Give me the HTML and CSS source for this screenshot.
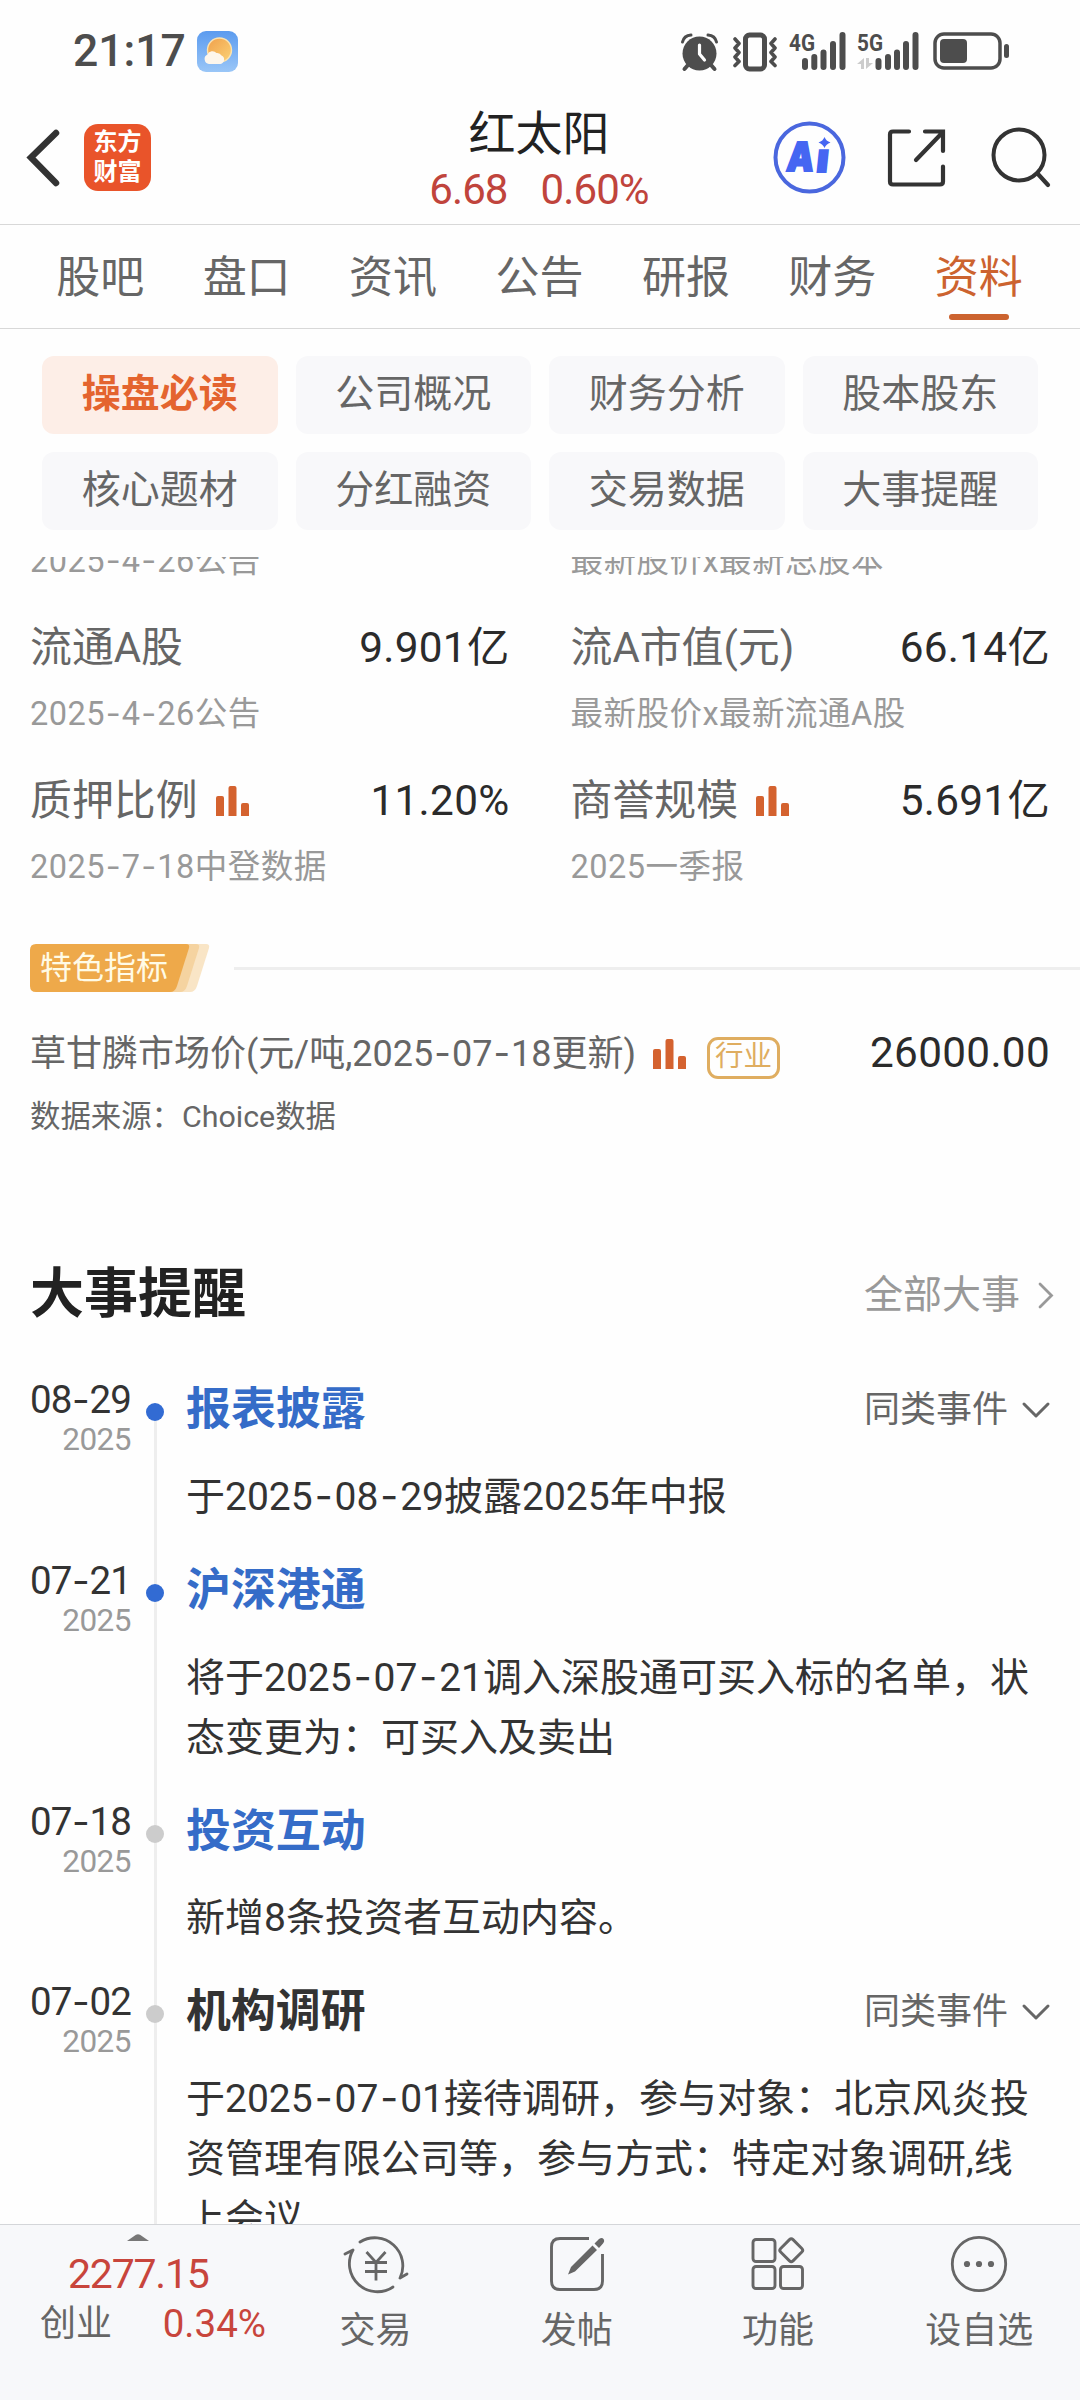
FILE: index.html
```html
<!DOCTYPE html>
<html lang="zh-CN">
<head>
    <meta charset="UTF-8" />
    <meta name="viewport" content="width=device-width, initial-scale=1.0" />
    <title>红太阳 - 资料</title>
    <link rel="stylesheet" href="styles.css">
</head>
<body>
    <div class="statusbar">
        <span class="clock">21:17</span>
        <svg class="weather" width="41" height="41" viewBox="0 0 41 41">
            <defs>
                <linearGradient id="sky" x1="0" y1="0" x2="0" y2="1">
                    <stop offset="0" stop-color="#5b9bef" /><stop offset="1" stop-color="#9ac6f7" />
                </linearGradient>
                <linearGradient id="sun" x1="0" y1="0" x2="1" y2="1">
                    <stop offset="0" stop-color="#f0a04b" /><stop offset="1" stop-color="#fbd277" />
                </linearGradient>
            </defs>
            <rect width="41" height="41" rx="9" fill="url(#sky)" />
            <circle cx="22.500" cy="19" r="12" fill="url(#sun)" stroke="#fbe3b0" stroke-width="1.400" />
            <path d="M12 33a5 5 0 0 1-1.500-9.500a5.500 5.500 0 0 1 9-1.500a5 5 0 0 1 5 2.500a4.500 4.500 0 0 1-1 8.500z" fill="#fdf6ec" />
        </svg>
        <div class="status-icons">
            <svg width="37" height="40" viewBox="0 0 37 40">
                <circle cx="18.500" cy="22.500" r="17" fill="#4d4d4d" />
                <path d="M1.500 11Q3 4.500 10 4M35.500 11Q34 4.500 27 4" stroke="#4d4d4d" stroke-width="3" fill="none" stroke-linecap="round" />
                <path d="M7 34l-3.500 4M30 34l3.500 4" stroke="#4d4d4d" stroke-width="4" stroke-linecap="round" />
                <path d="M18.500 14v9l5 6" stroke="#fff" stroke-width="3.200" fill="none" stroke-linecap="round" stroke-linejoin="round" />
            </svg>
            <svg class="vibrate" width="46" height="40" viewBox="0 0 46 40">
                <rect x="13.500" y="4" width="19" height="34" rx="4" fill="none" stroke="#4d4d4d" stroke-width="5" />
                <path d="M3 8l4 4.500l-4 4.500l4 4.500l-4 4.500l4 4.500l-4 4M43 8l-4 4.500l4 4.500l-4 4.500l4 4.500l-4 4.500l4 4" stroke="#4d4d4d" stroke-width="3.600" fill="none" stroke-linecap="round" stroke-linejoin="round" />
            </svg>
            <svg class="signal" width="57" height="40" viewBox="0 0 57 40">
                <text x="0" y="19.500" textLength="26" lengthAdjust="spacingAndGlyphs">4G</text>
                <path d="M16 30v6M25.300 26v10M34.500 21.500v14.500M44 13v23M53.500 4v32" />
            </svg>
            <svg class="signal second" width="62" height="40" viewBox="0 0 62 40">
                <text x="0" y="19.500" textLength="26" lengthAdjust="spacingAndGlyphs">5G</text>
                <path d="M21.500 30v6M31 26v10M40 21.500v14.500M49 13v23M58.500 4v32" />
                <path class="arrows" d="M7 27v11h-3v-5h-4zM9 27v11l7-6h-4v-5z" />
            </svg>
            <svg class="battery" width="76" height="40" viewBox="0 0 76 40">
                <rect x="2" y="3" width="65" height="34" rx="9" fill="none" stroke="#4d4d4d" stroke-width="3.500" />
                <rect x="7" y="8" width="27" height="24" rx="4" fill="#4d4d4d" />
                <rect x="71" y="13" width="5" height="14" rx="2.500" fill="#4d4d4d" />
            </svg>
        </div>
    </div>

    <div class="header">
        <div class="header-left">
            <svg width="34" height="58" viewBox="0 0 34 58">
                <path d="M29 4L4 28.500L29 54" fill="none" stroke="#333" stroke-width="6.500" stroke-linecap="round" />
            </svg>
            <div class="logo">东方<br />财富</div>
        </div>
        <div class="stock">
            <div class="stock-name">红太阳</div>
            <div class="stock-price"><span>6.68</span><span>0.60%</span></div>
        </div>
        <div class="header-right">
            <svg width="73" height="73" viewBox="0 0 73 73">
                <circle cx="36.500" cy="36.500" r="34" fill="none" stroke="#4a67de" stroke-width="4" />
                <g class="ai-text" transform="skewX(-6)">
                    <text x="18" y="50" textLength="27" lengthAdjust="spacingAndGlyphs">A</text>
                    <text x="48" y="51.500" textLength="12" lengthAdjust="spacingAndGlyphs">ı</text>
                </g>
                <path d="M51.500 16q1.500 4 6 5.500q-4.500 1.500-6 5.500q-1.500-4-6-5.500q4.500-1.500 6-5.500z" fill="#4566f2" />
            </svg>
            <svg class="share" width="58" height="58" viewBox="0 0 58 58">
                <path d="M21 2.500H5Q2 2.500 2 5.500V52.500Q2 55.500 5 55.500H52Q55 55.500 55 52.500V37.500M37 2.500H55V22M54 4L28 31" fill="none" stroke="#333" stroke-width="4.200" stroke-linecap="round" />
            </svg>
            <svg class="search" width="60" height="62" viewBox="0 0 60 62">
                <circle cx="28" cy="28" r="25.500" fill="none" stroke="#333" stroke-width="4" />
                <path d="M46.500 46.500L57 58" stroke="#333" stroke-width="4.200" stroke-linecap="round" />
            </svg>
        </div>
    </div>

    <div class="tabs">
        <div class="tab">股吧</div>
        <div class="tab">盘口</div>
        <div class="tab">资讯</div>
        <div class="tab">公告</div>
        <div class="tab">研报</div>
        <div class="tab">财务</div>
        <div class="tab active">资料</div>
    </div>

    <div class="subnav">
        <div class="chip active">操盘必读</div>
        <div class="chip">公司概况</div>
        <div class="chip">财务分析</div>
        <div class="chip">股本股东</div>
        <div class="chip">核心题材</div>
        <div class="chip">分红融资</div>
        <div class="chip">交易数据</div>
        <div class="chip">大事提醒</div>
    </div>

    <div class="content">
        <div class="metrics">
            <div class="metric-note">2025<i>-</i>4<i>-</i>26公告</div>
            <div class="metric-note">最新股价x最新总股本</div>

            <div class="metric">
                <div class="metric-row"><span>流通A股</span><b>9.901亿</b></div>
                <div class="metric-note">2025<i>-</i>4<i>-</i>26公告</div>
            </div>
            <div class="metric">
                <div class="metric-row"><span>流A市值(元)</span><b>66.14亿</b></div>
                <div class="metric-note">最新股价x最新流通A股</div>
            </div>
            <div class="metric">
                <div class="metric-row">
                    <span>质押比例</span>
                    <svg class="bars" width="33" height="30" viewBox="0 0 33 30"><path d="M0 30V12q0-2 2-2h4q2 0 2 2V30zM12.500 30V2q0-2 2-2h4q2 0 2 2V30zM25 30V19q0-2 2-2h4q2 0 2 2V30z" /></svg>
                    <b>11.20%</b>
                </div>
                <div class="metric-note">2025<i>-</i>7<i>-</i>18中登数据</div>
            </div>
            <div class="metric">
                <div class="metric-row">
                    <span>商誉规模</span>
                    <svg class="bars" width="33" height="30" viewBox="0 0 33 30"><path d="M0 30V12q0-2 2-2h4q2 0 2 2V30zM12.500 30V2q0-2 2-2h4q2 0 2 2V30zM25 30V19q0-2 2-2h4q2 0 2 2V30z" /></svg>
                    <b>5.691亿</b>
                </div>
                <div class="metric-note">2025一季报</div>
            </div>
        </div>

        <div class="special">
            <div class="ribbon">
                <svg width="180" height="48" viewBox="0 0 180 48">
                    <path d="M120 0h56q4 0 3 4l-12 38q-2 6-7 6h-40z" fill="#f9e5c6" />
                    <path d="M120 0h46q4 0 3 4l-12 38q-2 6-7 6h-30z" fill="#f5d3a0" />
                    <path d="M6 0h150q4 0 3 4l-12 38q-2 6-7 6H6q-6 0-6-6V6q0-6 6-6z" fill="#eea94a" />
                </svg>
                <span>特色指标</span>
            </div>
            <div class="rule"></div>
        </div>
        <div class="indicator">
            <span>草甘膦市场价(元/吨,2025<i>-</i>07<i>-</i>18更新)</span>
            <svg class="bars" width="33" height="30" viewBox="0 0 33 30"><path d="M0 30V12q0-2 2-2h4q2 0 2 2V30zM12.500 30V2q0-2 2-2h4q2 0 2 2V30zM25 30V19q0-2 2-2h4q2 0 2 2V30z" /></svg>
            <span class="industry">行业</span>
            <b>26000.00</b>
        </div>
        <div class="source">数据来源：Choice数据</div>

        <div class="section-head">
            <h2>大事提醒</h2>
            <span>全部大事</span>
            <svg width="16" height="27" viewBox="0 0 16 27"><path d="M2 2L13.500 13.500L2 25" fill="none" stroke="#999" stroke-width="2.800" stroke-linecap="round" /></svg>
        </div>

        <div class="timeline">
            <div class="event">
                <div class="date">08<i>-</i>29<span>2025</span></div>
                <div class="axis blue"></div>
                <div class="detail">
                    <div class="event-title">
                        <h3>报表披露</h3>
                        <span>同类事件</span>
                        <svg width="28" height="16" viewBox="0 0 28 16"><path d="M2 2L14 14L26 2" fill="none" stroke="#666" stroke-width="3" stroke-linecap="round" stroke-linejoin="round" /></svg>
                    </div>
                    <p>于2025<i>-</i>08<i>-</i>29披露2025年中报</p>
                </div>
            </div>
            <div class="event">
                <div class="date">07<i>-</i>21<span>2025</span></div>
                <div class="axis blue"></div>
                <div class="detail">
                    <div class="event-title"><h3>沪深港通</h3></div>
                    <p>将于2025<i>-</i>07<i>-</i>21调入深股通可买入标的名单，状<br />态变更为：可买入及卖出</p>
                </div>
            </div>
            <div class="event">
                <div class="date">07<i>-</i>18<span>2025</span></div>
                <div class="axis"></div>
                <div class="detail">
                    <div class="event-title"><h3>投资互动</h3></div>
                    <p>新增8条投资者互动内容。</p>
                </div>
            </div>
            <div class="event">
                <div class="date">07<i>-</i>02<span>2025</span></div>
                <div class="axis"></div>
                <div class="detail">
                    <div class="event-title">
                        <h3 class="plain">机构调研</h3>
                        <span>同类事件</span>
                        <svg width="28" height="16" viewBox="0 0 28 16"><path d="M2 2L14 14L26 2" fill="none" stroke="#666" stroke-width="3" stroke-linecap="round" stroke-linejoin="round" /></svg>
                    </div>
                    <p>于2025<i>-</i>07<i>-</i>01接待调研，参与对象：北京风炎投<br />资管理有限公司等，参与方式：特定对象调研,线<br />上会议</p>
                </div>
            </div>
        </div>
    </div>

    <div class="bottombar">
        <div class="index">
            <svg width="22" height="7" viewBox="0 0 22 7"><path d="M0 7L9 .800q2-1.200 4 0L22 7z" fill="#777" /></svg>
            <div class="index-value">2277.15</div>
            <div class="index-row"><span>创业</span><b>0.34%</b></div>
        </div>
        <div class="action">
            <svg width="66" height="60" viewBox="0 0 66 60">
                <path d="M17 8A28 28 0 0 1 57 44L64 40M50 53A28 28 0 0 1 10 16L2 20" fill="none" stroke="#666" stroke-width="2.800" stroke-linecap="round" stroke-linejoin="round" />
                <path d="M23.500 18l9.500 10.500l9.500-10.500M22 28.500h22M22 37.500h22M33 28.500v18" fill="none" stroke="#666" stroke-width="2.800" />
            </svg>
            <span>交易</span>
        </div>
        <div class="action">
            <svg width="56" height="60" viewBox="0 0 56 60">
                <path d="M40 4.500H11Q2.500 4.500 2.500 13V47Q2.500 55.500 11 55.500H45Q53.500 55.500 53.500 47V20" fill="none" stroke="#666" stroke-width="2.900" />
                <path d="M43.500 11.500l4.500 4.500l-22 21.500l-7 3l3-7.500zM45.500 9.500l4.500-4.500q3-2 4.500 0q1.500 2-.500 4.500l-4 4.500z" fill="#666" />
            </svg>
            <span>发帖</span>
        </div>
        <div class="action">
            <svg width="54" height="60" viewBox="0 0 54 60">
                <g fill="none" stroke="#666" stroke-width="2.900">
                    <rect x="2" y="5.500" width="22" height="22" rx="3" />
                    <rect x="2" y="32.500" width="22" height="22" rx="3" />
                    <rect x="29.500" y="32.500" width="22" height="22" rx="3" />
                    <rect x="31.500" y="7.500" width="17.500" height="17.500" rx="2.500" transform="rotate(45 40.250 16.250)" />
                </g>
            </svg>
            <span>功能</span>
        </div>
        <div class="action">
            <svg width="60" height="60" viewBox="0 0 60 60">
                <circle cx="30" cy="30" r="26.700" fill="none" stroke="#666" stroke-width="2.800" />
                <g fill="#666"><circle cx="18" cy="30" r="3.100" /><circle cx="30" cy="30" r="3.100" /><circle cx="42" cy="30" r="3.100" /></g>
            </svg>
            <span>设自选</span>
        </div>
    </div>
</body>
</html>
```
FILE: styles.css
```css
* {
    box-sizing: border-box;
}

body {
    width: 1080px;
    height: 2400px;
    margin: 0;
    overflow: hidden;
    display: flex;
    flex-direction: column;
    background: #fefefe;
    color: #333;
    font-family: Roboto, "Noto Sans CJK SC", sans-serif;
    white-space: nowrap;
}

svg {
    display: block;
    flex: none;
    overflow: visible;
}

b {
    font-weight: 400;
}

/* wider dash between date parts */
i {
    font-style: normal;
    font-family: Inter, sans-serif;
    margin: 0 .05em;
}

.statusbar {
    height: 91px;
    padding: 11px 71px 0 73px;
    display: flex;
    align-items: center;
}

.clock {
    font-size: 44.500px;
    font-weight: 500;
    color: #4d4d4d;
}

.weather {
    margin-left: 11px;
}

.status-icons {
    display: flex;
    margin-left: auto;
}

.vibrate {
    margin-left: 14px;
}

.signal {
    margin-left: 11px;
    fill: #4d4d4d;
}

.signal text {
    font-size: 24px;
    font-weight: 700;
}

.signal path {
    stroke: #4d4d4d;
    stroke-width: 6;
    stroke-linecap: round;
}

.signal .arrows {
    stroke: none;
    fill: #ccc;
}

.battery {
    margin-left: 14px;
}

.header {
    height: 134px;
    padding: 0 29px 0 27px;
    border-bottom: 1px solid #d8d8d8;
    display: flex;
    align-items: center;
}

.header-left, .header-right {
    flex: 1;
    display: flex;
    align-items: center;
}

.logo {
    width: 67px;
    height: 67px;
    margin-left: 23px;
    padding-top: 3px;
    border-radius: 14px;
    background: #e9542a;
    color: #fff;
    font-size: 24px;
    font-weight: 700;
    line-height: 30px;
    text-align: center;
}

.stock {
    padding-top: 5px;
    text-align: center;
}

.stock-name {
    font-size: 47px;
    line-height: 60px;
    color: #222;
}

.stock-price {
    display: flex;
    justify-content: center;
    gap: 33px;
    font-size: 42px;
    line-height: 52px;
    color: #c0443c;
    letter-spacing: -.900px;
}

.header-right {
    justify-content: flex-end;
}

.ai-text {
    font-family: Inter, sans-serif;
    font-size: 40px;
    font-weight: 900;
    fill: #4566f2;
    stroke: #4566f2;
    stroke-width: 2;
}

.share {
    margin-left: 42px;
}

.search {
    margin-left: 45px;
}

.tabs {
    height: 104px;
    padding: 0 28px 0 27px;
    border-bottom: 1px solid #d8d8d8;
    display: flex;
}

.tab {
    flex: 1;
    position: relative;
    padding-top: 4px;
    font-size: 44px;
    line-height: 99px;
    text-align: center;
    color: #666;
}

.tab.active {
    color: #cc632f;
}

.tab.active::after {
    content: "";
    position: absolute;
    left: 50%;
    bottom: 8px;
    width: 60px;
    height: 6px;
    margin-left: -30px;
    border-radius: 3px;
    background: #cc632f;
}

.subnav {
    height: 228px;
    padding: 27px 42px;
    display: grid;
    grid-template-columns: repeat(4, 1fr);
    grid-auto-rows: 78px;
    gap: 18px;
}

.chip {
    border-radius: 12px;
    background: #f8f8fa;
    color: #666;
    font-size: 39px;
    line-height: 77px;
    text-align: center;
}

.chip.active {
    background: #fdeee7;
    color: #e4642f;
    font-weight: 700;
}

.content {
    height: 1667px;
    overflow: hidden;
}

.metrics {
    margin-top: -18px;
    padding: 0 30px;
    display: grid;
    grid-template-columns: 1fr 1fr;
    column-gap: 61px;
    row-gap: 35px;
}

.metric-row {
    display: flex;
    align-items: center;
    font-size: 41.900px;
    line-height: 60px;
    color: #666;
}

.metric-row b, .indicator b {
    margin-left: auto;
    font-size: 42.300px;
    letter-spacing: .300px;
    color: #2b2b2b;
}

.metric-note {
    font-size: 32.500px;
    line-height: 44px;
    color: #999;
    letter-spacing: .500px;
}

.metric-note i {
    margin: 0 .02em;
}

.metric .metric-note {
    margin-top: 14px;
}

.bars {
    margin-left: 18px;
    fill: #d4622f;
}

.special {
    margin-top: 55px;
    padding-left: 30px;
    display: flex;
    align-items: center;
}

.ribbon {
    position: relative;
}

.ribbon span {
    position: absolute;
    left: 10px;
    top: 0;
    font-size: 32px;
    line-height: 49px;
    color: #fffbe6;
}

.rule {
    flex: 1;
    height: 3px;
    margin-left: 24px;
    background: #eee;
}

.indicator {
    margin-top: 31px;
    padding: 0 30px;
    display: flex;
    align-items: center;
    font-size: 36px;
    line-height: 60px;
    color: #666;
}

.indicator i {
    margin: 0 .03em;
}

.indicator .bars {
    margin-left: 17px;
}

.indicator b {
    margin-top: -2px;
}

.industry {
    height: 42px;
    margin: 8px 0 0 21px;
    padding: 0 5px;
    border: 3px solid #dfad60;
    border-radius: 11px;
    color: #dfad60;
    font-size: 28.500px;
    line-height: 34px;
}

.source {
    margin-top: 13px;
    padding-left: 30px;
    font-size: 30.400px;
    line-height: 40px;
    color: #666;
}

.section-head {
    margin-top: 123px;
    padding: 0 26px 0 30px;
    display: flex;
    align-items: center;
    color: #999;
    font-size: 39px;
    line-height: 70px;
}

.section-head h2 {
    margin: 0 auto 0 0;
    font-size: 54px;
    color: #222;
}

.section-head svg {
    margin-left: 18px;
}

.timeline {
    margin-top: 47px;
    padding: 0 30px;
}

.event {
    display: flex;
}

.date {
    width: 101px;
    font-size: 38.500px;
    line-height: 44px;
    letter-spacing: -1px;
}

.date i {
    margin: 0 .02em;
}

.date span {
    display: block;
    font-size: 31.500px;
    line-height: 35px;
    letter-spacing: -.500px;
    text-align: right;
    color: #999;
}

.axis {
    width: 18px;
    margin: 0 22px 0 15px;
    padding-top: 26px;
    background: linear-gradient(#eee, #eee) center / 3px 100% no-repeat;
}

.event:first-child .axis {
    background-position: center 35px;
}

.axis::before {
    content: "";
    display: block;
    height: 18px;
    border-radius: 9px;
    background: #ccc;
}

.axis.blue::before {
    background: #326bd3;
}

.detail {
    flex: 1;
    padding: 3px 0 31px;
}

.event-title {
    display: flex;
    align-items: center;
    font-size: 36px;
    line-height: 60px;
    color: #666;
}

.event-title h3 {
    margin: 0 auto 0 0;
    font-size: 44.900px;
    color: #356cc8;
}

.event-title h3.plain {
    color: #333;
}

.event-title svg {
    margin-left: 14px;
}

.detail p {
    margin: 26px 0 0;
    font-size: 39px;
    line-height: 60px;
}

.bottombar {
    flex: 1;
    border-top: 1px solid #d4d6d9;
    background: #f7f8fa;
    display: flex;
    color: #666;
    font-size: 36px;
}

.index {
    width: 275px;
    padding-top: 9px;
}

.index svg {
    margin-left: 127px;
}

.index-value {
    padding-left: 68px;
    margin-top: 7px;
    font-size: 41px;
    line-height: 52px;
    color: #c8453c;
    letter-spacing: -1.200px;
}

.index-row {
    display: flex;
    justify-content: space-between;
    padding: 1px 9px 0 40px;
    line-height: 46px;
}

.index-row b {
    font-size: 38.500px;
    color: #c8453c;
}

.action {
    flex: 1;
    padding-top: 9px;
    display: flex;
    flex-direction: column;
    align-items: center;
}

.action span {
    margin-top: 12px;
    line-height: 51px;
}
```
